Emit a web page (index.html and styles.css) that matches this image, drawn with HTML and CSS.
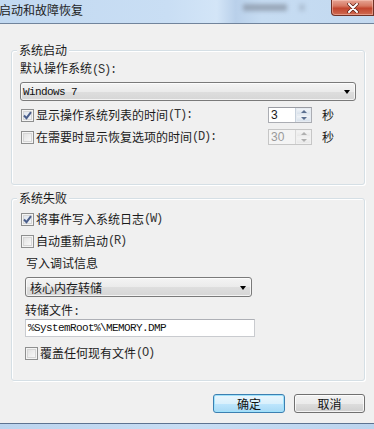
FILE: index.html
```html
<!DOCTYPE html>
<html lang="zh-CN">
<head>
<meta charset="utf-8">
<title>启动和故障恢复</title>
<link rel="stylesheet" href="styles.css">
</head>
<body>
<div class="window">
  <div class="titlebar">
    <span class="title">启动和故障恢复</span>
    <span class="ghost"></span>
    <span class="ghost small"></span>
    <div class="close">
      <svg width="14" height="10" viewBox="0 0 14 10">
        <path d="M3 1 L11 9 M11 1 L3 9" stroke="#5a2016" stroke-width="3.4" stroke-linecap="round"/>
        <path d="M3 1 L11 9 M11 1 L3 9" stroke="#fff" stroke-width="2" stroke-linecap="round"/>
      </svg>
    </div>
  </div>

  <div class="content">
    <fieldset class="group g1">
      <legend>系统启动</legend>
      <div class="lbl">默认操作系统<span class="k">(S):</span></div>
      <div class="combo os"><span class="mono">Windows 7</span><span class="arrow"></span></div>
      <div class="row spinrow">
        <label class="chk"><span class="box on"><svg width="11" height="11" viewBox="0 0 11 11"><path d="M2 5.5 L4.5 8.2 L9 2.2" fill="none" stroke="#4b5f8c" stroke-width="2"/></svg></span>显示操作系统列表的时间<span class="k">(T):</span></label>
        <div class="spin"><span class="val">3</span><span class="btns"><span class="up"></span><span class="dn"></span></span></div>
        <span class="unit">秒</span>
      </div>
      <div class="row spinrow">
        <label class="chk"><span class="box"></span>在需要时显示恢复选项的时间<span class="k">(D):</span></label>
        <div class="spin off"><span class="val">30</span><span class="btns"><span class="up"></span><span class="dn"></span></span></div>
        <span class="unit">秒</span>
      </div>
    </fieldset>

    <fieldset class="group g2">
      <legend>系统失败</legend>
      <div class="row"><label class="chk"><span class="box on"><svg width="11" height="11" viewBox="0 0 11 11"><path d="M2 5.5 L4.5 8.2 L9 2.2" fill="none" stroke="#4b5f8c" stroke-width="2"/></svg></span>将事件写入系统日志<span class="k">(W)</span></label></div>
      <div class="row r2"><label class="chk"><span class="box"></span>自动重新启动<span class="k">(R)</span></label></div>
      <div class="debug">
        <div class="lbl sub">写入调试信息</div>
        <div class="combo dump"><span>核心内存转储</span><span class="arrow"></span></div>
        <div class="lbl file">转储文件<span class="k">:</span></div>
        <div class="input"><span class="mono">%SystemRoot%\MEMORY.DMP</span></div>
        <div class="row r3"><label class="chk"><span class="box"></span>覆盖任何现有文件<span class="k">(O)</span></label></div>
      </div>
    </fieldset>

    <div class="buttons">
      <button class="btn default">确定</button>
      <button class="btn">取消</button>
    </div>
  </div>
  <div class="frame"></div>
</div>
</body>
</html>
```

FILE: styles.css
```css
* { box-sizing: border-box; }
html, body { margin: 0; padding: 0; }
body {
  width: 374px;
  height: 429px;
  overflow: hidden;
  background: #f0f0f0;
  font-family: "Noto Sans CJK SC", "Noto Sans", sans-serif;
  font-size: 12px;
  color: #1a1a1a;
}
.window {
  height: 429px;
  display: flex;
  flex-direction: column;
}
.titlebar {
  height: 24px;
  flex: none;
  display: flex;
  align-items: flex-start;
  border-bottom: 1px solid #71849c;
  background: linear-gradient(90deg, #c2d9f1 0%, #c9def4 45%, #d3e5f7 58%, #b9d0ea 63%, #c6dcf2 70%, #c3d9f0 100%);
}
.title {
  margin: 3px 0 0 -1px;
  line-height: 14px;
  color: #1e1e1e;
}
.ghost {
  margin: 4px 0 0 160px;
  width: 44px;
  height: 7px;
  background: #8d9aab;
  filter: blur(2px);
  opacity: 0.8;
}
.ghost.small {
  margin-left: 12px;
  width: 6px;
  opacity: 0.4;
}
.close {
  margin-left: auto;
  width: 43px;
  height: 16px;
  display: flex;
  align-items: center;
  justify-content: center;
  border: 1px solid #6e3126;
  border-top: none;
  border-radius: 0 0 0 4px;
  background: linear-gradient(180deg, #e6a595 0%, #d67761 40%, #c2452e 55%, #cf6b52 100%);
  box-shadow: inset 0 0 0 1px rgba(255, 210, 200, 0.45);
}

.content {
  flex: 1;
}
.group {
  margin: 0 9px 0 11px;
  border: 1px solid #d5dfe5;
  border-radius: 3px;
  box-shadow: inset 1px 1px 0 #fff, 1px 1px 0 #fff;
  padding: 0 8px 0 8px;
  min-width: 0;
}
.group legend {
  margin-left: -3px;
  padding: 0 2px;
  line-height: 14px;
  background: #f0f0f0;
  color: #1a1a1a;
}
.g1 {
  margin-top: 19px;
  padding-top: 4px;
  padding-bottom: 39px;
}
.g2 {
  margin-top: 6px;
  padding-top: 7px;
  padding-bottom: 20px;
}
.k {
  font-family: "Liberation Mono", monospace;
  font-size: 12px;
  letter-spacing: -1.2px;
  color: #333;
}
.mono {
  font-family: "Liberation Mono", monospace;
  font-size: 11px;
  letter-spacing: -0.6px;
  color: #111;
}
.lbl {
  height: 14px;
  line-height: 14px;
}
.combo {
  display: flex;
  align-items: center;
  justify-content: space-between;
  border: 1px solid #7a7a7a;
  border-radius: 3px;
  background: linear-gradient(180deg, #f4f4f4 0%, #ebebeb 50%, #dedede 51%, #d6d6d6 100%);
  box-shadow: inset 0 0 0 1px rgba(255, 255, 255, 0.7);
  padding: 0 5px 0 2px;
}
.combo.os {
  margin-top: 7px;
  height: 19px;
  width: 336px;
}
.combo.dump {
  margin-top: 7px;
  height: 20px;
  width: 227px;
  padding-left: 4px;
}
.arrow {
  width: 0;
  height: 0;
  border-left: 3.5px solid transparent;
  border-right: 3.5px solid transparent;
  border-top: 4px solid #000;
  margin-top: 1px;
}
.row {
  display: flex;
  align-items: center;
  height: 14px;
}
.spinrow {
  display: grid;
  grid-template-columns: 1fr 44px 12px;
  column-gap: 10px;
  align-items: center;
  height: 16px;
  margin-top: 6px;
  padding-right: 22px;
}
.chk {
  display: flex;
  align-items: center;
  line-height: 14px;
  white-space: nowrap;
}
.box {
  width: 13px;
  height: 13px;
  margin: 0 2px 0 1px;
  flex: none;
  border: 1px solid #8e8f8f;
  background: linear-gradient(135deg, #dcdcdc 0%, #f4f4f4 70%, #fcfcfc 100%);
  box-shadow: inset 0 0 0 1px #f4f4f4, inset 0 0 0 2px #d6d6d6;
  display: flex;
  align-items: center;
  justify-content: center;
}
.box.on {
  background: linear-gradient(135deg, #dde3ec 0%, #f5f7fa 100%);
}
.spin {
  display: flex;
  height: 16px;
  border: 1px solid #abadb3;
  border-top-color: #9a9ca3;
  background: #fff;
}
.spin .val {
  flex: 1;
  line-height: 14px;
  padding-left: 2px;
  font-family: "Liberation Sans", sans-serif;
  font-size: 12px;
}
.spin .btns {
  width: 16px;
  display: flex;
  flex-direction: column;
  border-left: 1px solid #c7d1dc;
}
.spin .up, .spin .dn {
  flex: 1;
  display: flex;
  align-items: center;
  justify-content: center;
  background: linear-gradient(180deg, #f1f4f8 0%, #d8e1eb 100%);
  border: 1px solid #e6ebf1;
}
.spin .up::after {
  content: "";
  border-left: 3px solid transparent;
  border-right: 3px solid transparent;
  border-bottom: 3px solid #5b6f8f;
}
.spin .dn::after {
  content: "";
  border-left: 3px solid transparent;
  border-right: 3px solid transparent;
  border-top: 3px solid #5b6f8f;
}
.spin.off {
  border-color: #c6c6c6;
  background: #f4f4f4;
}
.spin.off .val { color: #9a9a9a; }
.spin.off .up, .spin.off .dn {
  background: linear-gradient(180deg, #f4f4f4 0%, #e8e8e8 100%);
  border-color: #f0f0f0;
}
.spin.off .up::after { border-bottom-color: #b0b0b0; }
.spin.off .dn::after { border-top-color: #b0b0b0; }
.spin.off .btns { border-left-color: #d8d8d8; }
.unit {
  line-height: 14px;
}
.r2 { margin-top: 8px; }
.debug {
  padding-left: 5px;
}
.lbl.sub {
  margin-top: 8px;
  padding-left: 1px;
}
.lbl.file {
  margin-top: 6px;
}
.input {
  margin-top: 2px;
  width: 230px;
  height: 18px;
  display: flex;
  align-items: center;
  padding-left: 2px;
  border: 1px solid #c9cbcf;
  border-top-color: #aeb0b6;
  background: #fff;
}
.r3 { margin-top: 9px; }
.r3 .box { margin-left: 0; }

.buttons {
  margin-top: 13px;
  display: flex;
  justify-content: flex-end;
  gap: 9px;
  padding-right: 9px;
}
.btn {
  height: 19px;
  padding: 0;
  font-family: "Noto Sans CJK SC", sans-serif;
  font-size: 12px;
  line-height: 14px;
  color: #111;
  border: 1px solid #707070;
  border-radius: 3px;
  background: linear-gradient(180deg, #f2f2f2 0%, #ebebeb 50%, #dddddd 51%, #cfcfcf 100%);
  box-shadow: inset 0 0 0 1px rgba(255, 255, 255, 0.75);
  width: 71px;
}
.btn.default {
  width: 72px;
  border-color: #3c7fb1;
  background: linear-gradient(180deg, #eaf6fd 0%, #d9f0fc 50%, #bee6fd 51%, #a7d9f5 100%);
  box-shadow: inset 0 0 0 1px #9fe2fb;
}
.frame {
  height: 6px;
  flex: none;
  border-top: 1px solid #5d7391;
  background: linear-gradient(90deg, #bcd4ee, #c8ddf3 50%, #bcd4ee);
}
```
